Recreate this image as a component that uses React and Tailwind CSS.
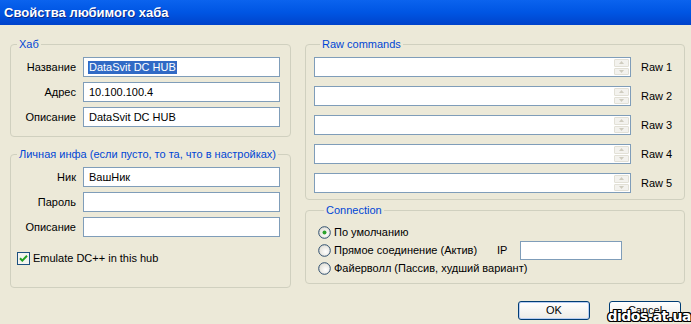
// Hub properties dialog, Windows XP look.
function Field({ children, selected }) {
  return (
    <div className="h-[20px] flex-1 border border-[#7f9db9] bg-white flex items-center pl-[4px] overflow-hidden">
      {selected ? (
        <span className="bg-[#316ac5] text-white leading-[13px] px-[1px]">{children}</span>
      ) : (
        <span className="leading-[13px] pl-[1px]">{children}</span>
      )}
    </div>
  );
}

function Row({ label, value, selected }) {
  return (
    <div className="flex items-center">
      <span className="w-[66px] text-right pr-[1px]">{label}</span>
      <div className="ml-[6px] w-[197px] flex">
        <Field selected={selected}>{value}</Field>
      </div>
    </div>
  );
}

function Group({ title, className, children }) {
  return (
    <fieldset className={`border border-[#d0d0bf] rounded-[4px] ${className}`}>
      <legend className="ml-[6px] px-[2px] leading-[13px] text-[#0046d5]">{title}</legend>
      {children}
    </fieldset>
  );
}

function Spinner() {
  return (
    <div className="h-full w-[16px] flex flex-col gap-[1px] py-[1px] pr-[1px]">
      {[0, 1].map((i) => (
        <div
          key={i}
          className="flex-1 bg-[#f3f2ee] border border-[#e2e0d6] rounded-[1px] flex items-center justify-center"
        >
          <svg width="5" height="3" viewBox="0 0 5 3">
            <path d={i === 0 ? "M0 3 L2.5 0 L5 3 Z" : "M0 0 L2.5 3 L5 0 Z"} fill="#cfccbf" />
          </svg>
        </div>
      ))}
    </div>
  );
}

function RawRow({ n }) {
  return (
    <div className="flex items-center">
      <div className="w-[317px] h-[20px] border border-[#7f9db9] bg-white flex justify-end">
        <Spinner />
      </div>
      <span className="ml-[10px]">Raw {n}</span>
    </div>
  );
}

function Radio({ checked }) {
  return (
    <svg width="13" height="13" viewBox="0 0 13 13">
      <defs>
        <radialGradient id="rg" cx="0.6" cy="0.6" r="0.7">
          <stop offset="0" stopColor="#ffffff" />
          <stop offset="1" stopColor="#dcdad0" />
        </radialGradient>
      </defs>
      <circle cx="6.5" cy="6.5" r="5.8" fill="url(#rg)" stroke="#2f4f6f" strokeWidth="1" />
      {checked ? <circle cx="6.5" cy="6.5" r="2" fill="#2ca22c" /> : null}
    </svg>
  );
}

function Button({ children, primary }) {
  return (
    <div
      className={`w-[72px] h-[19px] rounded-[3px] border border-[#003c74] bg-gradient-to-b from-[#ffffff] to-[#ecebe6] flex items-center justify-center ${
        primary ? "shadow-[inset_0_0_0_1px_#b7cdf3]" : ""
      }`}
    >
      {children}
    </div>
  );
}

export default function App() {
  return (
    <div className="relative w-[691px] h-[324px] overflow-hidden bg-[#ece9d8] text-[11px] text-black font-['Liberation_Sans',Arial,sans-serif]">
      <div className="h-[25px] bg-gradient-to-b from-[#0b63ee] via-[#0055e3] to-[#0043cb] flex items-center pl-[4px]">
        <span className="text-white font-bold text-[13px] [text-shadow:1px_1px_0_#0a2a8a]">
          Свойства любимого хаба
        </span>
      </div>

      <div className="flex gap-[14px] pl-[10px] pt-[13px]">
        {/* left column */}
        <div className="w-[281px] flex flex-col">
          <Group title="Хаб" className="pt-[6px] pb-[9px]">
            <div className="flex flex-col gap-[5px]">
              <Row label="Название" value="DataSvit DC HUB" selected />
              <Row label="Адрес" value="10.100.100.4" />
              <Row label="Описание" value="DataSvit DC HUB" />
            </div>
          </Group>
          <Group
            title="Личная инфа (если пусто, то та, что в настройках)"
            className="mt-[11px] pt-[6px] pb-[20px]"
          >
            <div className="flex flex-col gap-[5px]">
              <Row label="Ник" value="ВашНик" />
              <Row label="Пароль" value="" />
              <Row label="Описание" value="" />
            </div>
            <div className="flex items-center mt-[13px] pl-[6px]">
              <svg width="13" height="13" viewBox="0 0 13 13">
                <rect x="0.5" y="0.5" width="12" height="12" fill="#f4f4ef" stroke="#1c5180" />
                <path d="M3 6.2 L5.3 8.6 L10 3.8" fill="none" stroke="#21a121" strokeWidth="2" />
              </svg>
              <span className="ml-[3px]">Emulate DC++ in this hub</span>
            </div>
          </Group>
        </div>

        {/* right column */}
        <div className="w-[380px] flex flex-col">
          <Group title="Raw commands" className="pt-[6px] pb-[6px] pl-[8px]">
            <div className="flex flex-col gap-[9px]">
              {[1, 2, 3, 4, 5].map((n) => (
                <RawRow key={n} n={n} />
              ))}
            </div>
          </Group>
          <Group title="Connection" className="mt-[4px] pt-[6px] pb-[6px] pl-[12px]">
            <div className="flex flex-col">
              <div className="h-[18px] flex items-center">
                <Radio checked />
                <span className="ml-[3px]">По умолчанию</span>
              </div>
              <div className="h-[18px] flex items-center">
                <Radio />
                <span className="ml-[3px] w-[163px]">Прямое соединение (Актив)</span>
                <span className="w-[23px]">IP</span>
                <div className="w-[102px] h-[19px] border border-[#7f9db9] bg-white" />
              </div>
              <div className="h-[18px] flex items-center">
                <Radio />
                <span className="ml-[3px]">Файерволл (Пассив, худший вариант)</span>
              </div>
            </div>
          </Group>
        </div>
      </div>

      <div className="flex justify-end gap-[19px] pr-[10px] mt-[13px]">
        <Button primary>OK</Button>
        <Button>Cancel</Button>
      </div>

      <span className="absolute right-[0px] bottom-[1px] font-['DejaVu_Sans',sans-serif] font-bold text-[14px] leading-[14px] text-white tracking-[-0.5px] [text-shadow:1px_0_0_#000,-1px_0_0_#000,0_1px_0_#000,0_-1px_0_#000,1px_1px_0_#000,-1px_-1px_0_#000,1px_-1px_0_#000,-1px_1px_0_#000]">
        didos.at.ua
      </span>
    </div>
  );
}
